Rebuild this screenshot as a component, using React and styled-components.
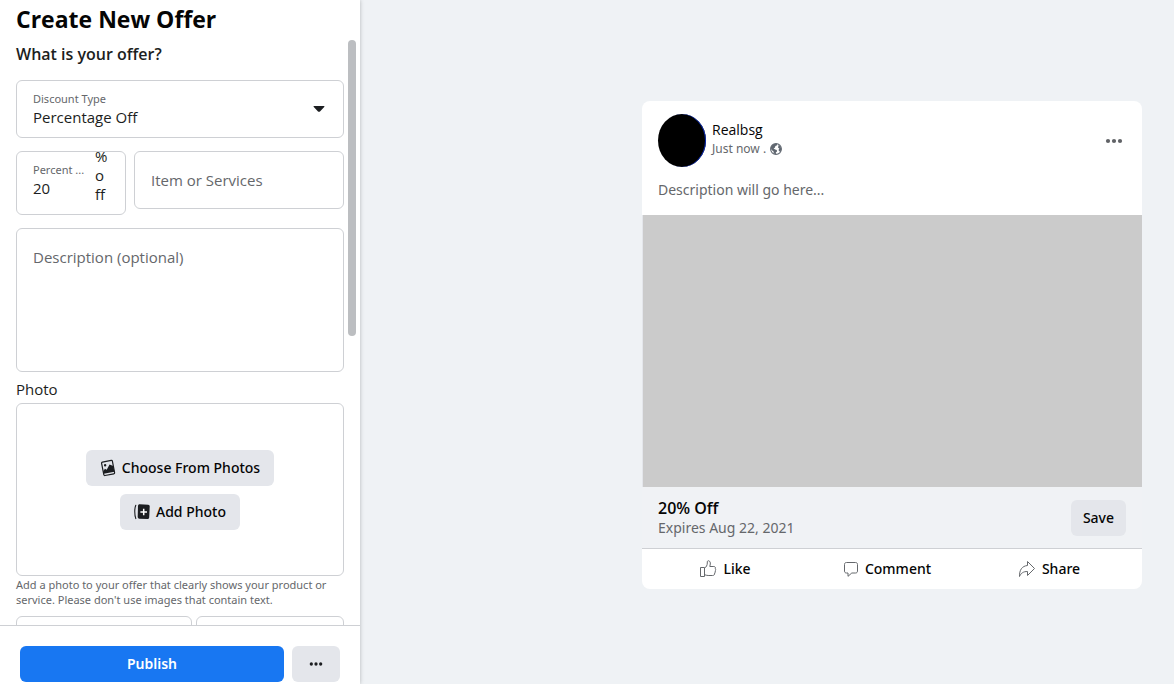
import React, { useState } from 'react'
import styled, { createGlobalStyle } from 'styled-components'

function App() {
    const [discountType, setDiscountType] = useState('percentage')
    const [percent, setPercent] = useState('20')
    const [item, setItem] = useState('')
    const [description, setDescription] = useState('')

    return (
        <>
            <GlobalStyle />
            <Page>
                <Sidebar>
                    <Title>Create New Offer</Title>
                    <Scroller>
                        <Form>
                            <SectionTitle>What is your offer?</SectionTitle>
                            <SelectField>
                                <FieldText>
                                    <FieldLabel htmlFor="discount-type">Discount Type</FieldLabel>
                                    <Select
                                        id="discount-type"
                                        value={discountType}
                                        onChange={(e) => setDiscountType(e.target.value)}
                                    >
                                        <option value="percentage">Percentage Off</option>
                                        <option value="amount">Amount Off</option>
                                    </Select>
                                </FieldText>
                                <CaretIcon />
                            </SelectField>

                            <OfferRow>
                                <PercentField>
                                    <FieldText>
                                        <FieldLabel htmlFor="percent">Percent ...</FieldLabel>
                                        <Input
                                            id="percent"
                                            value={percent}
                                            onChange={(e) => setPercent(e.target.value)}
                                        />
                                    </FieldText>
                                    <Suffix>%off</Suffix>
                                </PercentField>
                                <ItemField>
                                    <Input
                                        aria-label="Item or Services"
                                        placeholder="Item or Services"
                                        value={item}
                                        onChange={(e) => setItem(e.target.value)}
                                    />
                                </ItemField>
                            </OfferRow>

                            <Description
                                aria-label="Description (optional)"
                                placeholder="Description (optional)"
                                value={description}
                                onChange={(e) => setDescription(e.target.value)}
                            />

                            <PhotoTitle>Photo</PhotoTitle>
                            <PhotoBox>
                                <Button type="button">
                                    <PhotosIcon />
                                    Choose From Photos
                                </Button>
                                <Button type="button">
                                    <AddPhotoIcon />
                                    Add Photo
                                </Button>
                            </PhotoBox>
                            <Hint>
                                Add a photo to your offer that clearly shows your product or
                                service. Please don't use images that contain text.
                            </Hint>
                            <DateRow>
                                <Box />
                                <Box />
                            </DateRow>
                        </Form>
                        <Track>
                            <Thumb />
                        </Track>
                    </Scroller>
                    <Footer>
                        <PublishButton type="button">Publish</PublishButton>
                        <MoreButton type="button" aria-label="More options">
                            <DotsIcon size={14} color="#1c1e21" />
                        </MoreButton>
                    </Footer>
                </Sidebar>

                <Preview>
                    <Card>
                        <CardHeader>
                            <Avatar />
                            <Author>
                                <AuthorName>Realbsg</AuthorName>
                                <Posted>
                                    Just now . <GlobeIcon />
                                </Posted>
                            </Author>
                            <CardMenu type="button" aria-label="Post options">
                                <DotsIcon size={18} color="#606266" />
                            </CardMenu>
                        </CardHeader>
                        <CardText>Description will go here...</CardText>
                        <Picture />
                        <OfferBar>
                            <div>
                                <OfferName>20% Off</OfferName>
                                <Expires>Expires Aug 22, 2021</Expires>
                            </div>
                            <SaveButton type="button">Save</SaveButton>
                        </OfferBar>
                        <Actions>
                            <Action type="button">
                                <LikeIcon />
                                Like
                            </Action>
                            <Action type="button">
                                <CommentIcon />
                                Comment
                            </Action>
                            <Action type="button">
                                <ShareIcon />
                                Share
                            </Action>
                        </Actions>
                    </Card>
                </Preview>
            </Page>
        </>
    )
}

export default App

const CaretIcon = () => (
    <svg width="12" height="8" viewBox="0 0 12 8" aria-hidden="true">
        <path d="M1.2 1h9.6c.6 0 .8.6.4 1L7 6.400c-.6.6-1.400.6-2 0L.8 2C.4 1.600.6 1 1.200 1z" fill="#1c1e21" />
    </svg>
)

const PhotosIcon = () => (
    <svg width="16" height="18" viewBox="0 0 16 18" aria-hidden="true">
        <g transform="rotate(-11 8 9)">
            <rect x="2.6" y="2.2" width="11" height="13.6" rx="1" fill="none" stroke="#1c1e21" strokeWidth="1.2" />
            <circle cx="5.7" cy="5.8" r="1.2" fill="#1c1e21" />
            <path d="M2.6 11.4l2.2-2.2 1.6 1.2 3.8-4.6L13.6 8v5.8h-11z" fill="#1c1e21" />
        </g>
    </svg>
)

const AddPhotoIcon = () => (
    <svg width="16" height="18" viewBox="0 0 16 18" aria-hidden="true">
        <path d="M1.8 2.2C.4 5 .4 12 1.8 15.6" fill="none" stroke="#1c1e21" strokeWidth="1.1" strokeLinecap="round" />
        <path d="M5.6 1.2l8.6.6c.9.1 1.5.7 1.5 1.6l-.5 11.2c-.1.9-.7 1.5-1.6 1.5l-8.4-.4c-.9-.1-1.5-.7-1.5-1.6L4 2.7c.1-.9.7-1.5 1.6-1.5z" fill="#1c1e21" />
        <path d="M9.7 5.7v6.6M6.4 9H13" stroke="#fff" strokeWidth="1.5" />
    </svg>
)

const DotsIcon = ({ size, color }) => (
    <svg width={size} height="6" viewBox="0 0 18 6" aria-hidden="true">
        <circle cx="3" cy="3" r="2.1" fill={color} />
        <circle cx="9" cy="3" r="2.1" fill={color} />
        <circle cx="15" cy="3" r="2.1" fill={color} />
    </svg>
)

const GlobeIcon = () => (
    <svg width="12" height="12" viewBox="0 0 12 12" aria-hidden="true">
        <circle cx="6" cy="6" r="5.4" fill="#fff" stroke="#606770" strokeWidth="1.1" />
        <path d="M.8 4.6C1.4 2 4 .4 7 .8L7.2 2.2 5.4 3 5 4.6 3.6 5.4 5.2 6.4 6.8 7 7 8.6 5.8 9.6 6 11.3 3.6 10.6 3.6 8.6 1.4 6.8z" fill="#606770" />
        <path d="M8.6 1.6l1.8 1.6.9 2.8-.7 2.6-1.6-.4-.4-1.4.8-1-1.4-1.4.4-1.4z" fill="#606770" />
    </svg>
)

const LikeIcon = () => (
    <svg width="18" height="18" viewBox="0 0 18 18" fill="none" stroke="#65686c" strokeLinejoin="round" aria-hidden="true">
        <path d="M1.5 7.5h4v9h-4z" />
        <path d="M5.5 8.3C7.3 7 8.3 5.2 8.3 3V2c0-1 .7-1.5 1.5-1.2 1.2.4 1.7 1.7 1.5 3.2l-.5 2.5h4c1.4 0 2 1.2 1.5 2.2.5.7.5 1.6-.1 2.2.3.9.1 1.6-.5 2.1.1 1.7-.7 2.5-2.2 2.5H9.2c-1.6 0-2.4-.5-3.7-.8" />
    </svg>
)

const CommentIcon = () => (
    <svg width="16" height="18" viewBox="0 0 16 18" fill="none" stroke="#65686c" strokeLinejoin="round" aria-hidden="true">
        <path d="M3.5 2.5h9c1.3 0 2 .7 2 2v6.5c0 1.3-.7 2-2 2H8.8L5 16.3V13H3.5c-1.3 0-2-.7-2-2V4.5c0-1.3.7-2 2-2z" />
    </svg>
)

const ShareIcon = () => (
    <svg width="18" height="18" viewBox="0 0 18 18" fill="none" stroke="#65686c" strokeLinejoin="round" aria-hidden="true">
        <path d="M9.5 1.5l7 7-7 7v-4c-4 0-6.3 1.3-8 5C1.3 10 4 6 9.5 5.5z" />
    </svg>
)

const compactFont = '"Noto Sans", "Open Sans", sans-serif'

const GlobalStyle = createGlobalStyle`
    * {
        box-sizing: border-box;
    }
    body {
        margin: 0;
        color: #1c1e21;
        background: #eff2f5;
        font-family: "Open Sans", "Noto Sans", sans-serif;
        font-size: 15px;
        line-height: 20px;
    }
    button, input, select, textarea {
        font: inherit;
        color: inherit;
    }
    h1, h2, h3, p {
        margin: 0;
    }
    svg {
        flex: none;
    }
`

const Page = styled.div`
    display: flex;
    height: 100vh;
    overflow: hidden;
`

const Sidebar = styled.aside`
    display: flex;
    flex-direction: column;
    width: 360px;
    flex: none;
    background: #fff;
    box-shadow: 0 0 4px rgba(0, 0, 0, 0.25);
`

const Title = styled.h1`
    padding: 3px 16px 5px;
    color: #050505;
    font-size: 23px;
    font-weight: 700;
    line-height: 32px;
`

const Scroller = styled.div`
    display: flex;
    flex: 1;
    min-height: 0;
    gap: 4px;
    padding: 0 4px 0 16px;
    overflow: hidden;
`

const Form = styled.form`
    flex: 1;
    min-width: 0;
`

const Track = styled.div`
    width: 8px;
`

const Thumb = styled.div`
    height: 296px;
    border-radius: 4px;
    background: #bcbec1;
`

const SectionTitle = styled.h2`
    padding: 4px 0 16px;
    font-size: 16px;
    font-weight: 600;
    line-height: 20px;
`

const Box = styled.div`
    display: flex;
    min-width: 0;
    border: 1px solid #ced0d4;
    border-radius: 6px;
    background: #fff;
`

const SelectField = styled(Box)`
    align-items: center;
    height: 58px;
    padding: 0 18px 0 16px;
`

const FieldText = styled.div`
    display: flex;
    flex-direction: column;
    flex: 1;
    min-width: 0;
`

const FieldLabel = styled.label`
    color: #65676b;
    font-family: ${compactFont};
    font-size: 11px;
    line-height: 16px;
    white-space: nowrap;
`

const Select = styled.select`
    width: 100%;
    height: 20px;
    padding: 0;
    border: 0;
    outline: 0;
    background: none;
    appearance: none;
    line-height: 20px;
`

const Input = styled.input`
    width: 100%;
    height: 20px;
    padding: 0;
    border: 0;
    outline: 0;
    background: none;

    &::placeholder {
        color: #65676b;
        opacity: 1;
    }
`

const OfferRow = styled.div`
    display: flex;
    align-items: flex-start;
    gap: 8px;
    margin: 13px 0;
`

// the suffix is taller than the field, its first line is cut by the top border
const PercentField = styled(Box)`
    gap: 10px;
    width: 110px;
    height: 64px;
    padding: 10px 17px 10px 16px;
    overflow: hidden;
`

const Suffix = styled.span`
    align-self: flex-end;
    width: 13px;
    line-height: 19px;
    word-break: break-all;
`

const ItemField = styled(Box)`
    flex: 1;
    align-items: center;
    height: 58px;
    padding: 0 16px;
`

const Description = styled.textarea`
    display: block;
    width: 100%;
    height: 144px;
    padding: 18px 16px;
    border: 1px solid #ced0d4;
    border-radius: 6px;
    outline: 0;
    resize: none;

    &::placeholder {
        color: #65676b;
        opacity: 1;
    }
`

const PhotoTitle = styled.h3`
    padding: 7px 0 4px;
    font-size: 15px;
    font-weight: 500;
    line-height: 20px;
`

const PhotoBox = styled(Box)`
    flex-direction: column;
    align-items: center;
    justify-content: center;
    gap: 8px;
    height: 173px;
`

const Button = styled.button`
    display: flex;
    align-items: center;
    justify-content: center;
    gap: 6px;
    height: 36px;
    padding: 0 14px;
    border: 0;
    border-radius: 6px;
    background: #e4e6eb;
    color: #050505;
    font-family: ${compactFont};
    font-size: 14px;
    font-weight: 500;
    white-space: nowrap;
    cursor: pointer;
`

const PublishButton = styled(Button)`
    flex: 1;
    background: #1877f2;
    color: #fff;
    font-weight: 600;
`

const MoreButton = styled(Button)`
    width: 48px;
`

const SaveButton = styled(Button)`
    padding: 0 12px;
`

const Hint = styled.p`
    padding: 1px 0 9px;
    color: #65676b;
    font-family: ${compactFont};
    font-size: 11px;
    line-height: 15px;
`

const DateRow = styled.div`
    display: grid;
    grid-template-columns: 176fr 148fr;
    gap: 4px;
    height: 58px;
`

const Footer = styled.footer`
    display: flex;
    gap: 8px;
    padding: 20px 20px 2px;
    border-top: 1px solid #ced0d4;
`

const Preview = styled.main`
    display: flex;
    flex: 1;
    justify-content: flex-end;
    align-items: flex-start;
    min-width: 0;
    padding: 101px 32px 32px;
`

const Card = styled.article`
    width: 100%;
    max-width: 500px;
    border-radius: 8px;
    overflow: hidden;
    background: #fff;
`

const CardHeader = styled.header`
    display: flex;
    align-items: center;
    gap: 6px;
    padding: 13px 16px 0;
`

const Avatar = styled.div`
    width: 48px;
    height: 53px;
    border-radius: 50%;
    background: #000;
    box-shadow: inset -1px 0 0 #0a2bb8;
`

const Author = styled.div`
    flex: 1;
    align-self: flex-start;
    padding-top: 6px;
`

const AuthorName = styled.h3`
    color: #050505;
    font-size: 14px;
    font-weight: 500;
    line-height: 20px;
`

const Posted = styled.p`
    display: flex;
    align-items: center;
    gap: 4px;
    color: #65676b;
    font-family: ${compactFont};
    font-size: 12px;
    line-height: 18px;
`

const CardMenu = styled.button`
    display: flex;
    padding: 8px 3px;
    border: 0;
    background: none;
    cursor: pointer;
`

const CardText = styled.p`
    padding: 13px 16px 15px;
    color: #65676b;
    font-family: ${compactFont};
    font-size: 14px;
`

const Picture = styled.div`
    height: 272px;
    border-left: 1px solid #e4e6eb;
    background: #cbcbcb;
`

const OfferBar = styled.div`
    display: flex;
    align-items: center;
    justify-content: space-between;
    height: 62px;
    padding: 0 16px;
    border-bottom: 1px solid #ced0d4;
    background: #f0f2f5;
`

const OfferName = styled.h3`
    color: #050505;
    font-size: 16px;
    font-weight: 600;
    line-height: 20px;
`

const Expires = styled.p`
    color: #65676b;
    font-family: ${compactFont};
    font-size: 14px;
`

const Actions = styled.div`
    display: flex;
    padding: 0 12px 0 2px;
`

const Action = styled.button`
    display: flex;
    flex: 1 1 0;
    align-items: center;
    justify-content: center;
    gap: 6px;
    height: 40px;
    padding: 0;
    border: 0;
    background: none;
    color: #050505;
    font-family: ${compactFont};
    font-size: 14px;
    font-weight: 500;
    cursor: pointer;
`
